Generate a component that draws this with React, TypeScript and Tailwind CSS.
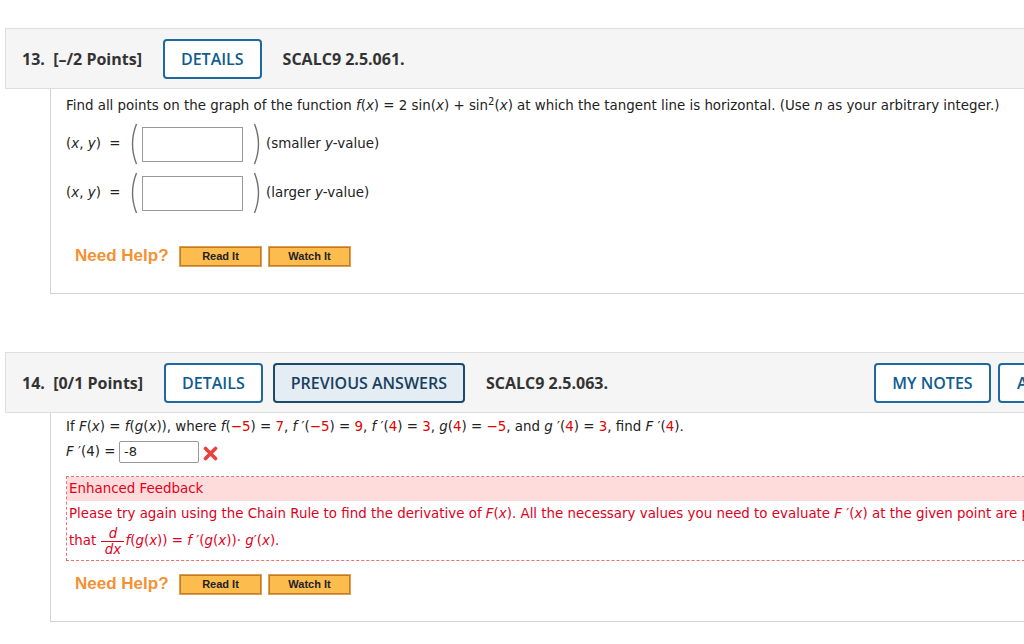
import React from "react";

const headFont = { fontFamily: '"Open Sans", "Liberation Sans", sans-serif' };
const bodyFont = { fontFamily: '"DejaVu Sans", Verdana, sans-serif' };
const helpFont = { fontFamily: '"Liberation Sans", Arial, sans-serif' };

function OutlineButton({ label, active, className = "" }: { label: string; active?: boolean; className?: string }) {
  return (
    <div
      className={`h-10 px-4 flex items-center rounded-[4px] border-2 text-[16px] font-semibold whitespace-nowrap ${
        active ? "border-[#1d4a6b] bg-[#e5edf4] text-[#18405f]" : "border-[#1e6aa0] bg-white text-[#105c8f]"
      } ${className}`}
    >
      {label}
    </div>
  );
}

function Header({ num, points, code, extra }: { num: string; points: string; code: string; extra?: boolean }) {
  return (
    <div className="h-[61px] flex items-center border border-[#dedede] bg-[#f5f5f5] pl-4 text-[#333]" style={headFont}>
      <span className="text-[16px] font-bold whitespace-nowrap">
        {num}&nbsp; [{points} Points]
      </span>
      <div className="ml-[21px] flex gap-[10px]">
        <OutlineButton label="DETAILS" />
        {extra && <OutlineButton label="PREVIOUS ANSWERS" active />}
      </div>
      <span className="ml-[21px] text-[16px] font-bold whitespace-nowrap">{code}</span>
      {extra && (
        <div className="ml-auto flex gap-[7px] mr-[11px]">
          <OutlineButton label="MY NOTES" className="w-[117px] justify-center" />
          <OutlineButton label="ASK YOUR TEACHER" className="w-[190px] justify-center" />
        </div>
      )}
    </div>
  );
}

function Paren({ flip }: { flip?: boolean }) {
  return (
    <svg width="10" height="42" viewBox="0 0 10 42" className={flip ? "-scale-x-100" : ""}>
      <path d="M8.5 1 Q0.5 21 8.5 41" fill="none" stroke="#707070" strokeWidth="1.4" />
    </svg>
  );
}

function HelpRow() {
  return (
    <div className="flex items-center h-[22px] pl-[9px]" style={helpFont}>
      <span className="text-[17px] font-bold text-[#f29233] w-[104px]">Need Help?</span>
      <div className="flex gap-[6px]">
        {["Read It", "Watch It"].map((t) => (
          <div
            key={t}
            className="w-[83px] h-[21px] flex items-center justify-center border border-[#e0a050] bg-[#fdbc4e] shadow-[inset_0_0_0_1px_#c07a28] text-[11px] font-bold text-[#222]"
          >
            {t}
          </div>
        ))}
      </div>
    </div>
  );
}

function PointRow({ note }: { note: React.ReactNode }) {
  return (
    <div className="flex items-center h-10">
      <span className="w-[62px] whitespace-nowrap">
        (<i>x</i>, <i>y</i>)&nbsp; =
      </span>
      <Paren />
      <div className="ml-[4px] w-[101px] h-[35px] border border-[#999] bg-white" />
      <div className="ml-[10px]">
        <Paren flip />
      </div>
      <span className="ml-[3px]">{note}</span>
    </div>
  );
}

function Red({ children }: { children: React.ReactNode }) {
  return <span className="text-[#e00000]">{children}</span>;
}

export default function App() {
  return (
    <div className="w-[1024px] h-[644px] overflow-hidden bg-white">
      <div className="w-[1200px] pt-[28px] pl-[5px]">
        {/* question 13 */}
        <Header num="13." points="–/2" code="SCALC9 2.5.061." />
        <div className="ml-[45px] border-l border-b border-[#d2d2d2] pl-[15px] pt-[7px] pb-[26px] text-[13.4px] text-[#222]" style={bodyFont}>
          <div className="h-5 leading-5 whitespace-nowrap">
            Find all points on the graph of the function <i>f</i>(<i>x</i>) = 2 sin(<i>x</i>) + sin
            <sup className="text-[10px]">2</sup>(<i>x</i>) at which the tangent line is horizontal. (Use <i>n</i> as your
            arbitrary integer.)
          </div>
          <div className="mt-[8px]">
            <PointRow
              note={
                <>
                  (smaller <i>y</i>-value)
                </>
              }
            />
          </div>
          <div className="mt-[9px]">
            <PointRow
              note={
                <>
                  (larger <i>y</i>-value)
                </>
              }
            />
          </div>
          <div className="mt-[32px]">
            <HelpRow />
          </div>
        </div>

        <div className="h-[58px]" />

        {/* question 14 */}
        <Header num="14." points="0/1" code="SCALC9 2.5.063." extra />
        <div className="ml-[45px] border-l border-b border-[#d2d2d2] pl-[15px] pt-[4px] pb-[26px] text-[13.4px] text-[#222]" style={bodyFont}>
          <div className="h-5 leading-5 whitespace-nowrap">
            If <i>F</i>(<i>x</i>) = <i>f</i>(<i>g</i>(<i>x</i>)), where <i>f</i>(<Red>−5</Red>) = <Red>7</Red>, <i>f</i> ′(
            <Red>−5</Red>) = <Red>9</Red>, <i>f</i> ′(<Red>4</Red>) = <Red>3</Red>, <i>g</i>(<Red>4</Red>) = <Red>−5</Red>,
            and <i>g</i> ′(<Red>4</Red>) = <Red>3</Red>, find <i>F</i> ′(<Red>4</Red>).
          </div>
          <div className="mt-[4px] flex items-center h-[22px]">
            <span className="w-[53px] whitespace-nowrap">
              <i>F</i> ′(4) =
            </span>
            <div className="w-[80px] h-[22px] border border-[#999] rounded-[2px] pl-[4px] leading-5 text-[13px]">-8</div>
            <svg width="15" height="15" viewBox="0 0 15 15" className="ml-[4px] mt-[3px]">
              <path d="M2.5 2.5 L12.5 12.5 M12.5 2.5 L2.5 12.5" stroke="#e8423c" strokeWidth="3.6" strokeLinecap="round" />
            </svg>
          </div>
          <div className="mt-[13px] border border-dashed border-[#f07070] text-[#e0001b]">
            <div className="h-[24px] bg-[#ffdcdc] pl-[2px] leading-[24px]">Enhanced Feedback</div>
            <div className="pl-[2px] pt-[2px] h-[22px] leading-[22px] whitespace-nowrap">
              Please try again using the Chain Rule to find the derivative of <i>F</i>(<i>x</i>). All the necessary values you
              need to evaluate <i>F</i> ′(<i>x</i>) at the given point are provided in the problem statement.
            </div>
            <div className="pl-[2px] h-[37px] flex items-center whitespace-nowrap">
              <span>that&nbsp;</span>
              <span className="inline-flex flex-col items-center leading-[15px] mx-[1px]">
                <i className="px-[3px] border-b border-[#e0001b]">&nbsp;d&nbsp;</i>
                <i>dx</i>
              </span>
              <span>
                <i>f</i>(<i>g</i>(<i>x</i>)) = <i>f</i> ′(<i>g</i>(<i>x</i>))· <i>g</i>′(<i>x</i>).
              </span>
            </div>
          </div>
          <div className="mt-[12px]">
            <HelpRow />
          </div>
        </div>
      </div>
    </div>
  );
}
